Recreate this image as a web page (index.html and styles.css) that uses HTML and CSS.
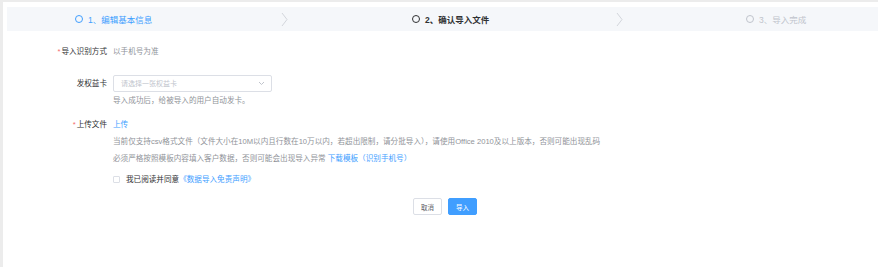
FILE: index.html
```html
<!DOCTYPE html>
<html lang="zh-CN">
<head>
  <meta charset="UTF-8" />
  <title>导入客户</title>
  <link rel="stylesheet" href="styles.css">
</head>
<body>

  <div class="page">
    <div class="steps">
      <div class="step step-1 done">
        <span class="dot"></span>1、编辑基本信息
        <svg class="arrow" width="7" height="15" viewBox="0 0 7 15"><polyline points="1,1 6,7.5 1,14" fill="none" stroke="#d3d6dc" stroke-width="1"/></svg>
      </div>
      <div class="step step-2 active">
        <span class="dot"></span>2、确认导入文件
        <svg class="arrow" width="7" height="15" viewBox="0 0 7 15"><polyline points="1,1 6,7.5 1,14" fill="none" stroke="#d3d6dc" stroke-width="1"/></svg>
      </div>
      <div class="step step-3">
        <span class="dot"></span>3、导入完成
      </div>
    </div>

    <div class="form">
      <div class="row">
        <label class="label req">导入识别方式</label>
        <div class="field value">以手机号为准</div>
      </div>

      <div class="row row-card">
        <label class="label">发权益卡</label>
        <div class="field">
          <div class="select">
            <span class="placeholder">请选择一张权益卡</span>
            <svg width="7" height="5" viewBox="0 0 7 5"><polyline points="1,1 3.5,3.5 6,1" fill="none" stroke="#c0c4cc" stroke-width="1"/></svg>
          </div>
          <p class="hint">导入成功后，给被导入的用户自动发卡。</p>
        </div>
      </div>

      <div class="row row-upload">
        <label class="label req">上传文件</label>
        <div class="field">
          <a class="link" href="#">上传</a>
          <p class="hint">当前仅支持csv格式文件（文件大小在10M以内且行数在10万以内，若超出限制，请分批导入），请使用Office 2010及以上版本，否则可能出现乱码</p>
          <p class="hint">必须严格按照模板内容填入客户数据，否则可能会出现导入异常 <a class="link" href="#">下载模板（识别手机号）</a></p>
          <label class="agree"><span class="checkbox"></span>我已阅读并同意<a class="link" href="#">《数据导入免责声明》</a></label>
        </div>
      </div>

      <div class="actions">
        <button class="btn">取消</button>
        <button class="btn btn-primary">导入</button>
      </div>
    </div>
  </div>

</body>
</html>
```

FILE: styles.css
```css
* {
  box-sizing: border-box;
  margin: 0;
  padding: 0;
  font-family: 'Liberation Sans', 'Noto Sans CJK SC', sans-serif;
}

body {
  background: #ececec;
  min-height: 100vh;
  padding: 2px 0 0 3px;
}

.page {
  background: white;
  min-height: calc(100vh - 2px);
  padding-top: 5px;
}

.steps {
  display: flex;
  margin-left: 4px;
  height: 24px;
  background: #f5f7fa;
  font-size: 8.5px;
  color: #c0c4cc;
}

.step {
  display: flex;
  align-items: center;
  position: relative;
}

.step-1 {
  width: 285px;
  padding-left: 68px;
}

.step-2 {
  width: 335px;
  padding-left: 120px;
}

.step-3 {
  flex: 1;
  padding-left: 119px;
}

.step .arrow {
  position: absolute;
  right: 4px;
  top: 5px;
}

.dot {
  width: 8px;
  height: 8px;
  border: 1.3px solid #c0c4cc;
  border-radius: 50%;
  margin-right: 5px;
}

.step.done {
  color: #409eff;
}

.step.done .dot {
  border-color: #409eff;
}

.step.active {
  color: #303133;
  font-weight: bold;
}

.step.active .dot {
  border-color: #303133;
}

.form {
  padding-top: 12px;
  font-size: 7.6px;
  color: #606266;
}

.row {
  display: flex;
  line-height: 17px;
}

.label {
  width: 110px;
  padding-right: 6px;
  text-align: right;
  color: #303133;
}

.req::before {
  content: "*";
  color: #f56c6c;
  margin-right: 1px;
}

.field {
  flex: 1;
}

.value {
  color: #909399;
}

.row-card {
  margin-top: 15px;
}

.row-upload {
  margin-top: 7px;
}

.select {
  width: 159px;
  height: 17px;
  border: 1px solid #dcdfe6;
  border-radius: 2px;
  display: flex;
  align-items: center;
  justify-content: space-between;
  padding: 0 6px 0 7px;
}

.placeholder {
  color: #c0c4cc;
  font-size: 7px;
}

.hint {
  color: #909399;
}

.link {
  color: #409eff;
  text-decoration: none;
}

.agree {
  display: flex;
  align-items: center;
  margin-top: 4px;
  color: #303133;
}

.checkbox {
  width: 7px;
  height: 7px;
  border: 1px solid #dcdfe6;
  border-radius: 1px;
  margin-right: 6px;
}

.actions {
  display: flex;
  justify-content: center;
  gap: 6px;
  margin-top: 10px;
  padding-left: 9px;
}

.btn {
  width: 29px;
  height: 17px;
  font-size: 6.5px;
  border: 1px solid #dcdfe6;
  border-radius: 2px;
  background: white;
  color: #606266;
}

.btn-primary {
  background: #409eff;
  border-color: #409eff;
  color: white;
}
```
